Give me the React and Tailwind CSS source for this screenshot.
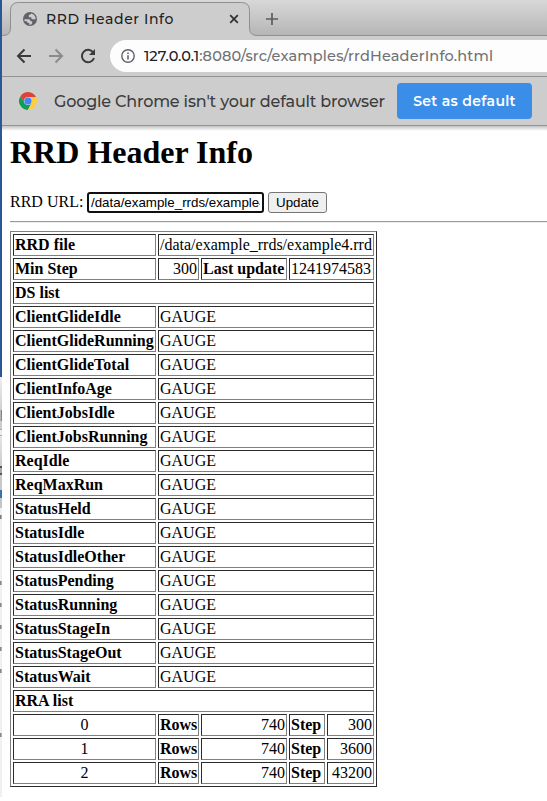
import React from "react";

const UI = "font-['Montserrat','Inter',sans-serif]";
const cell = "border border-t-[#2c2c2c] border-l-[#2c2c2c] border-r-[#808080] border-b-[#808080] p-px leading-[18px] whitespace-nowrap";

const sources = [
  "ClientGlideIdle", "ClientGlideRunning", "ClientGlideTotal", "ClientInfoAge",
  "ClientJobsIdle", "ClientJobsRunning", "ReqIdle", "ReqMaxRun", "StatusHeld",
  "StatusIdle", "StatusIdleOther", "StatusPending", "StatusRunning",
  "StatusStageIn", "StatusStageOut", "StatusWait",
];
const archives = [[0, 740, 300], [1, 740, 3600], [2, 740, 43200]];

function Cell({ bold, align = "text-left", span = 1, children }) {
  return <td colSpan={span} className={`${cell} ${align} ${bold ? "font-bold" : ""}`}>{children}</td>;
}

function TabStrip() {
  return (
    <div className="relative flex h-9 items-center bg-linear-to-b from-[#d8d8d8] to-[#b5b5b5]">
      <svg className="absolute inset-0" width="545" height="36" viewBox="0 0 545 36" fill="none">
        <path d="M0 35.5H1Q8.5 35.5 8.5 28V10.5Q8.5 2.5 16.5 2.5H239.5Q247.5 2.5 247.5 10.5V28Q247.5 35.5 255 35.5H545V36H0Z" fill="#cdcdcd" />
        <path d="M0 35.5H1Q8.5 35.5 8.5 28V10.5Q8.5 2.5 16.5 2.5H239.5Q247.5 2.5 247.5 10.5V28Q247.5 35.5 255 35.5H545" stroke="#8f8f8f" />
      </svg>
      <svg className="relative ml-5 mt-[2px] size-4 shrink-0" viewBox="0 0 16 16">
        <circle cx="8" cy="8" r="7" fill="#5f6368" />
        <path d="M2.3 8.2H6.5C8 8.3 8.5 9 8.4 10.3H10.2V12.2C9.5 13.5 8.3 13.8 7.3 13.7V12H5.6C5.6 10.8 5 10.2 4 10.2H2.7ZM9.3 2.5C8.8 3.7 6.8 3.6 6.8 4.5V6.2H9.2C9.2 8 9.8 8.2 11.3 8.3H13.7C13.8 5.5 12 3.1 9.3 2.5Z" fill="#cdcdcd" />
      </svg>
      <span className={`${UI} relative ml-2 mt-[2px] w-[183px] whitespace-nowrap text-[14px] font-medium tracking-[0.6px] text-[#1f2022]`}>RRD Header Info</span>
      <svg className="relative mt-[2px] size-[10px] shrink-0" viewBox="0 0 10 10" stroke="#303133" strokeWidth="1.7"><path d="M1.2 1.2l7.6 7.6M8.8 1.2L1.2 8.8" /></svg>
      <svg className="relative ml-[27px] mt-[2px] size-3 shrink-0" viewBox="0 0 12 12" stroke="#5d5d5d" strokeWidth="1.7"><path d="M6 0v12M0 6h12" /></svg>
    </div>
  );
}

function Toolbar() {
  return (
    <div className="flex h-10 items-center bg-[#cdcdcd] pl-[14px]">
      <svg className="size-4 shrink-0" viewBox="0 0 16 16" fill="none" stroke="#393a3c" strokeWidth="2"><path d="M15 8H2.5M8.5 1.5L2 8l6.5 6.5" /></svg>
      <svg className="ml-4 size-4 shrink-0" viewBox="0 0 16 16" fill="none" stroke="#8b8b8b" strokeWidth="2"><path d="M1 8h12.5M7.5 1.5L14 8l-6.5 6.5" /></svg>
      <svg className="ml-4 size-4 shrink-0" viewBox="0 0 16 16" fill="none"><path d="M13.2 4.5A6.2 6.2 0 1 0 14 10" stroke="#393a3c" strokeWidth="2" /><path d="M15 1v6H9Z" fill="#393a3c" /></svg>
      <div className="ml-[14px] flex h-8 flex-1 items-center rounded-l-full bg-[#fdfdfd] pl-[11px]">
        <svg className="size-[14px] shrink-0" viewBox="0 0 14 14" fill="none" stroke="#5f6368"><circle cx="7" cy="7" r="6.2" strokeWidth="1.4" /><path d="M7 6.2v4.3M7 3.5v1.6" strokeWidth="1.6" /></svg>
        <span className={`${UI} ml-[9px] mt-px whitespace-nowrap text-[14.5px] font-medium tracking-[0.18px] text-[#707174]`}><span className="tracking-[-0.02px] text-[#202124]">127.0.0.1</span>:8080/src/examples/rrdHeaderInfo.html</span>
      </div>
    </div>
  );
}

function DefaultBrowserBar() {
  return (
    <div className="flex h-[50px] items-center border-t border-b border-[#939393] bg-[#cdcdcd] pl-[17px]">
      <svg className="size-[18px] shrink-0" viewBox="0 0 48 48">
        <path d="M24 13H45.3A24 24 0 0 1 23 48L34 28Z" fill="#ffcd40" />
        <path d="M4 11L15 29L24 34L32 31L23 48A24 24 0 0 1 4 11Z" fill="#109d58" />
        <path d="M4 11A24 24 0 0 1 45.3 13H24L14 27Z" fill="#dd4437" />
        <circle cx="24" cy="24" r="10.5" fill="#c9d8f0" /><circle cx="24" cy="24" r="9.5" fill="#4285f4" />
      </svg>
      <span className={`${UI} ml-[17px] mt-[2px] w-[343px] whitespace-nowrap text-[16px] font-medium tracking-[-0.18px] text-[#3d3d3d]`}>Google Chrome isn't your default browser</span>
      <button className={`${UI} h-9 w-[135px] shrink-0 whitespace-nowrap rounded-[4px] bg-[#3a8ee8] text-[14px] font-semibold tracking-[0.32px] text-white`}>Set as default</button>
    </div>
  );
}

function HeaderTable() {
  return (
    <table className="mt-[8px] w-[367px] table-fixed border-separate border-spacing-[2px] border border-t-[#808080] border-l-[#808080] border-r-[#2c2c2c] border-b-[#2c2c2c] text-[16px]">
      <colgroup><col className="w-[143px]" /><col className="w-[41px]" /><col className="w-[86px]" /><col className="w-[36px]" /><col className="w-[47px]" /></colgroup>
      <tbody>
        <tr><Cell bold>RRD file</Cell><Cell span={4}>/data/example_rrds/example4.rrd</Cell></tr>
        <tr><Cell bold>Min Step</Cell><Cell align="text-right">300</Cell><Cell bold>Last update</Cell><Cell span={2}>1241974583</Cell></tr>
        <tr><Cell bold span={5}>DS list</Cell></tr>
        {sources.map((name) => <tr key={name}><Cell bold>{name}</Cell><Cell span={4}>GAUGE</Cell></tr>)}
        <tr><Cell bold span={5}>RRA list</Cell></tr>
        {archives.map(([id, rows, step]) => (
          <tr key={id}><Cell align="text-center">{id}</Cell><Cell bold>Rows</Cell><Cell align="text-right">{rows}</Cell><Cell bold>Step</Cell><Cell align="text-right">{step}</Cell></tr>
        ))}
      </tbody>
    </table>
  );
}

// Sliver of the window behind the browser, visible along the left edge.
function WindowBehind() {
  return (
    <div className="flex w-[2px] shrink-0 flex-col">
      <div className="h-[377px] bg-[#2b5797]" />
      <div className="h-[33px] bg-linear-to-b from-[#eeeeee] to-[#d0d0d0]" />
      <div className="h-[11px] bg-linear-to-r from-[#cccccc] to-[#8d6650]" />
      <div className="h-[8px] bg-[#cccccc]" />
      <div className="h-[7px] border-y border-[#aaaaaa] bg-[#eeeeee]" />
      <div className="h-[30px] bg-linear-to-b from-[#e5e5e5] to-[#cccccc]" />
      <div className="h-[9px] border-y-2 border-[#555555] bg-[#aaaaaa]" />
      <div className="h-[15px] bg-[#c8c8c8]" />
      <div className="h-[8px] bg-[#3c70ac]" />
      <div className="h-[10px] bg-[#c5c5c5]" />
      <div className="h-[7px] bg-[#f0f0f0]" />
      <div className="h-[4px] bg-linear-to-r from-[#70605a] to-[#b5c8d5]" />
      <div className="h-[62px] bg-[#f0f0f0]" />
      {[18, 18, 18, 18, 60, 60].map((gap, i) => (
        <React.Fragment key={i}>
          <div className="h-[4px] bg-linear-to-r from-[#8a7068] to-[#b5c8d5]" />
          <div className="bg-[#f0f0f0]" style={{ height: gap }} />
        </React.Fragment>
      ))}
    </div>
  );
}

export default function App() {
  return (
    <div className="flex h-[801px] w-[547px] overflow-hidden bg-white">
      <WindowBehind />
      <div className="flex min-w-0 flex-1 flex-col">
        <TabStrip />
        <Toolbar />
        <DefaultBrowserBar />
        <main className="flex-1 bg-linear-to-b from-[#c4c4c4] to-white to-[5px] pl-2 font-['Liberation_Serif',serif] text-[16px] text-black">
          <h1 className="pt-[8px] text-[32px] font-bold leading-[37px]">RRD Header Info</h1>
          <div className="mt-[20px] flex h-[22px] items-center">
            <span className="w-[77px] whitespace-nowrap leading-[18px]">RRD URL:</span>
            <input readOnly defaultValue="/data/example_rrds/example4.rrd" className="h-[21px] w-[177px] rounded-[3px] border-2 border-[#101010] bg-white px-[2px] font-['Liberation_Sans',sans-serif] text-[13.333px] outline-none" />
            <button className="ml-1 h-[21px] w-[59px] rounded-[3px] border border-[#767676] bg-[#efefef] font-['Liberation_Sans',sans-serif] text-[13.333px] leading-[15px]">Update</button>
          </div>
          <div className="mt-[8px] h-[2px] border-t border-b border-t-[#9a9a9a] border-b-[#eeeeee]" />
          <HeaderTable />
        </main>
      </div>
    </div>
  );
}
